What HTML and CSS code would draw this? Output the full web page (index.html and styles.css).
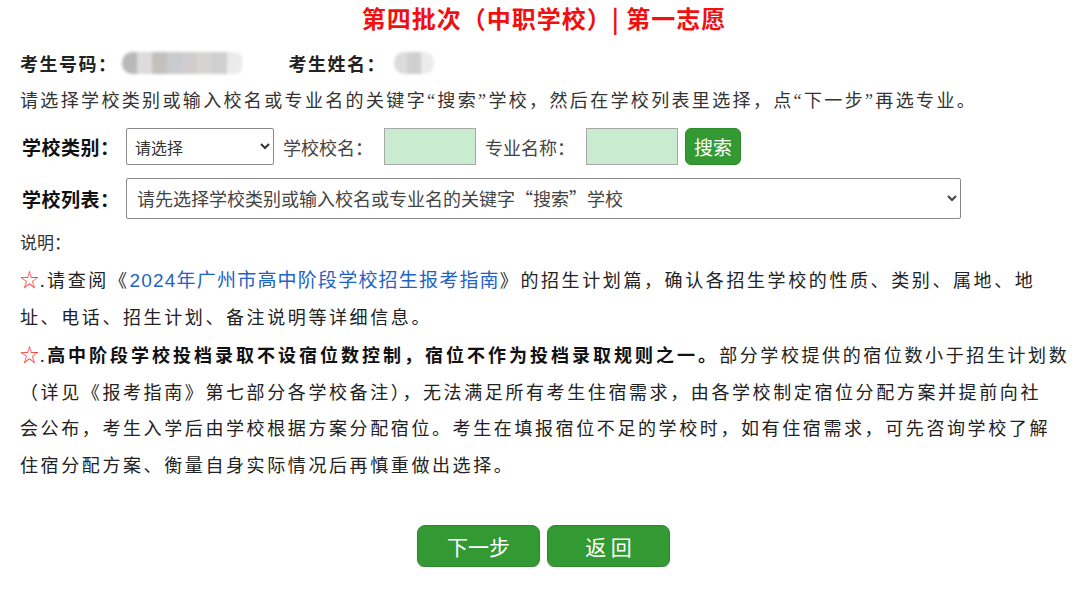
FILE: index.html
```html
<!DOCTYPE html>
<html lang="zh-CN">
<head>
<meta charset="utf-8">
<title>第四批次（中职学校）| 第一志愿</title>
<link rel="stylesheet" href="styles.css">
</head>
<body>
<div class="page">
  <h1 class="title">第四批次（中职学校）| 第一志愿</h1>

  <div class="idrow">
    <span class="idlabel">考生号码：</span>
    <span class="mosaic mosaic-id">
      <i class="m1"></i><i class="m2"></i><i class="m3"></i><i class="m4"></i><i class="m5"></i><i class="m6"></i><i class="m7"></i><i class="m8"></i>
    </span>
    <span class="idlabel name-label">考生姓名：</span>
    <span class="mosaic mosaic-name">
      <i class="m2"></i><i class="m7"></i><i class="m8"></i>
    </span>
  </div>

  <p class="intro">请选择学校类别或输入校名或专业名的关键字“搜索”学校，然后在学校列表里选择，点“下一步”再选专业。</p>

  <div class="formrow">
    <span class="flabel">学校类别：</span>
    <select class="sel sel-type"><option>请选择</option></select>
    <span class="ilabel">学校校名：</span>
    <input class="txt" type="text">
    <span class="ilabel">专业名称：</span>
    <input class="txt" type="text">
    <button class="btn-search" type="button">搜索</button>
  </div>

  <div class="formrow row2">
    <span class="flabel">学校列表：</span>
    <select class="sel sel-list"><option>请先选择学校类别或输入校名或专业名的关键字“搜索”学校</option></select>
  </div>

  <div class="note-title">说明：</div>

  <p class="para"><span class="star">☆</span>.请查阅《<a class="guide" href="#">2024年广州市高中阶段学校招生报考指南</a>》的招生计划篇，确认各招生学校的性质、类别、属地、地<br>址、电话、招生计划、备注说明等详细信息。</p>

  <p class="para"><span class="star">☆</span>.<b class="strong">高中阶段学校投档录取不设宿位数控制，宿位不作为投档录取规则之一。</b>部分学校提供的宿位数小于招生计划数<br>（详见《报考指南》第七部分各学校备注），无法满足所有考生住宿需求，由各学校制定宿位分配方案并提前向社<br>会公布，考生入学后由学校根据方案分配宿位。考生在填报宿位不足的学校时，如有住宿需求，可先咨询学校了解<br>住宿分配方案、衡量自身实际情况后再慎重做出选择。</p>

  <div class="actions">
    <button class="btn-big" type="button">下一步</button>
    <button class="btn-big" type="button">返 回</button>
  </div>
</div>
</body>
</html>
```

FILE: styles.css
```css
html, body {
  margin: 0;
  padding: 0;
  background: #ffffff;
}

body {
  font-family: "Liberation Serif", "Noto Sans CJK SC", serif;
  color: #222222;
  width: 1080px;
  overflow: hidden;
}

.page {
  padding: 0 0 0 20px;
  width: 1060px;
}

.title {
  margin: 0;
  text-align: center;
  font-family: "Noto Sans CJK SC", sans-serif;
  font-size: 24px;
  font-weight: 700;
  line-height: 36px;
  letter-spacing: 1px;
  color: #f01010;
  position: relative;
  left: -6px;
}

.idrow {
  display: flex;
  align-items: center;
  margin-top: 12px;
  height: 30px;
}

.idlabel {
  font-family: "Noto Sans CJK SC", sans-serif;
  font-weight: 700;
  font-size: 18px;
  letter-spacing: 1.5px;
  color: #222;
}

.name-label {
  margin-left: 45px;
}

.mosaic {
  display: flex;
  height: 22px;
  margin-left: 4px;
  filter: blur(1.5px);
  border-radius: 10px;
  overflow: hidden;
}

.mosaic i {
  display: block;
  width: 15px;
  height: 22px;
}

.mosaic-id { width: 122px; }
.mosaic-name { width: 40px; margin-left: 8px; }

.m1 { background: #b9b9b9; }
.m2 { background: #dcdcdc; }
.m3 { background: #c4c0bc; }
.m4 { background: #c8ccd0; }
.m5 { background: #d2ccce; }
.m6 { background: #d6d4d2; }
.m7 { background: #cfcfcf; }
.m8 { background: #ebebeb; }

.intro {
  margin: 8px 0 0 0;
  font-size: 18px;
  letter-spacing: 2.35px;
  line-height: 30px;
  color: #333;
}

.formrow {
  display: flex;
  align-items: center;
  margin-top: 12px;
  height: 37px;
}

.row2 {
  margin-top: 13px;
  height: 40px;
}

.flabel {
  font-family: "Noto Sans CJK SC", sans-serif;
  font-weight: 700;
  font-size: 19px;
  letter-spacing: 0.5px;
  color: #111;
  margin-left: 2px;
  width: 104px;
}

.sel {
  font-family: "Noto Sans CJK SC", sans-serif;
  border: 1px solid #8a8a8a;
  border-radius: 2px;
  background: #fff;
  color: #333;
  padding: 0 4px;
  margin: 0;
}

.sel-type {
  width: 148px;
  height: 37px;
  font-size: 16px;
}

.sel-list {
  width: 835px;
  height: 41px;
  font-size: 18px;
  color: #444;
  padding-left: 6px;
}

.ilabel {
  font-family: "Noto Sans CJK SC", sans-serif;
  font-size: 18px;
  color: #444;
  margin-left: 9px;
  width: 101px;
}

.txt {
  width: 92px;
  height: 37px;
  box-sizing: border-box;
  margin: 0;
  background: #c9ecd1;
  border: 1px solid #a8a8a8;
  padding: 0 4px;
}

.btn-search {
  margin-left: 7px;
  width: 56px;
  height: 37px;
  background: #339a33;
  border: 1px solid #2c8a2c;
  border-radius: 6px;
  color: #fff;
  font-family: "Noto Sans CJK SC", sans-serif;
  font-size: 19px;
  padding: 0;
}

.note-title {
  margin-top: 9px;
  font-family: "Noto Sans CJK SC", sans-serif;
  font-size: 17px;
  line-height: 30px;
  color: #333;
}

.para {
  margin: 0;
  font-size: 18px;
  letter-spacing: 2.6px;
  line-height: 36.6px;
  color: #222;
  white-space: nowrap;
}

.note-title + .para {
  margin-top: 6px;
}

.star {
  color: #ff3030;
  font-family: "Noto Sans CJK SC", sans-serif;
  font-size: 19px;
  letter-spacing: 1px;
  line-height: 1;
}

.guide {
  font-family: "Liberation Sans", "Noto Sans CJK SC", sans-serif;
  font-size: 19px;
  color: #1f63c4;
  text-decoration: none;
  letter-spacing: 1.2px;
  line-height: 1;
}

.strong {
  font-family: "Noto Sans CJK SC", sans-serif;
  font-weight: 700;
  letter-spacing: 3px;
  color: #111;
}

.actions {
  display: flex;
  justify-content: center;
  gap: 7px;
  margin-top: 40px;
  padding-right: 13px;
}

.btn-big {
  width: 123px;
  height: 42px;
  background: #339a33;
  border: 1px solid #2c8a2c;
  border-radius: 8px;
  color: #fff;
  font-family: "Noto Sans CJK SC", sans-serif;
  font-size: 21px;
  padding: 0;
  box-shadow: 0 1px 1px rgba(0,0,0,0.25);
}
```
